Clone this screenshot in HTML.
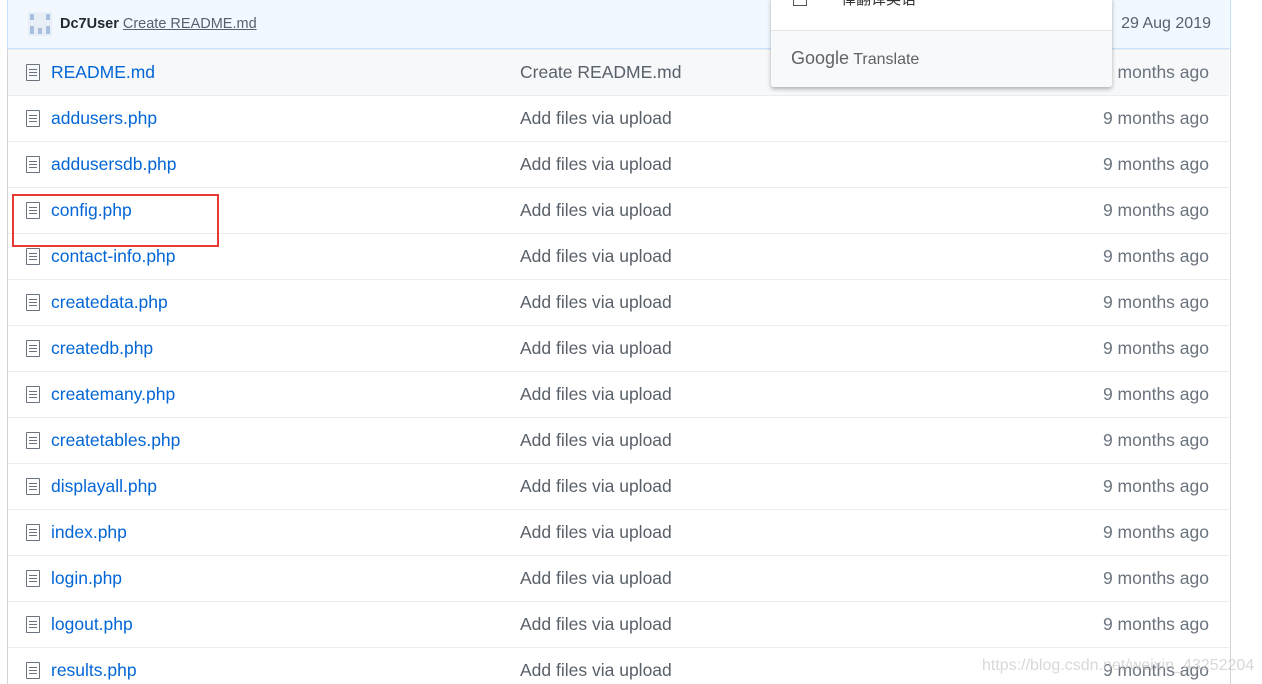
<!DOCTYPE html>
<html><head><meta charset="utf-8"><style>
html,body{margin:0;width:1262px;height:684px;overflow:hidden}
body{background:#fff;font-family:"Segoe UI","Liberation Sans","Noto Sans CJK SC",sans-serif;position:relative}
.box{position:absolute;left:7px;top:0;width:1222px;height:684px;border-left:1px solid #d1d5da;border-right:1px solid #d1d5da;box-sizing:border-box;width:1224px}
.hdr{position:absolute;left:7px;top:0;width:1222px;height:48px;background:#f1f8ff;border:1px solid #c8e1ff;border-top:none}
.row{position:absolute;left:8px;width:1221px;height:37px;padding-bottom:0;border-top:1px solid #eaecef;font-size:17.5px;overflow:hidden}
.row .n{position:absolute;left:43px;top:12px;color:#0366d6}
.row .m{position:absolute;left:512px;top:12px;color:#586069}
.row .a{position:absolute;right:20px;top:12px;color:#6a737d}
.ic{position:absolute;left:18px;top:14px;width:14px;height:17px;border:1.5px solid #6a737d;border-radius:1px;box-sizing:border-box}
.ic:before{content:"";position:absolute;left:2px;right:2px;top:4px;height:8px;background:repeating-linear-gradient(#6a737d 0 1px,transparent 1px 3px)}
</style></head><body>
<div class="box"></div>
<div class="hdr">
 <div style="position:absolute;left:20px;top:12px;width:24px;height:24px;background:#e8eef5">
  <div style="position:absolute;left:2px;top:2px;width:4px;height:6px;background:#a8bfe0"></div>
  <div style="position:absolute;left:18px;top:2px;width:4px;height:6px;background:#a8bfe0"></div>
  <div style="position:absolute;left:2px;top:14px;width:4px;height:8px;background:#a8bfe0"></div>
  <div style="position:absolute;left:10px;top:16px;width:4px;height:6px;background:#a8bfe0"></div>
  <div style="position:absolute;left:18px;top:14px;width:4px;height:8px;background:#a8bfe0"></div>
 </div>
 <div style="position:absolute;left:52px;top:16px;font-size:14.5px;color:#24292e"><b style="font-weight:600">Dc7User</b> <span style="color:#586069;text-decoration:underline">Create README.md</span></div>
 <div style="position:absolute;right:19px;top:15px;font-size:16px;color:#586069">29 Aug 2019</div>
</div>
<div class="row" style="top:49px;height:45px;background:#f6f8fa"><div class="ic"></div><span class="n">README.md</span><span class="m">Create README.md</span><span class="a">9 months ago</span></div>
<div class="row" style="top:95px;height:45px"><div class="ic"></div><span class="n">addusers.php</span><span class="m">Add files via upload</span><span class="a">9 months ago</span></div>
<div class="row" style="top:141px;height:45px"><div class="ic"></div><span class="n">addusersdb.php</span><span class="m">Add files via upload</span><span class="a">9 months ago</span></div>
<div class="row" style="top:187px;height:45px"><div class="ic"></div><span class="n">config.php</span><span class="m">Add files via upload</span><span class="a">9 months ago</span></div>
<div class="row" style="top:233px;height:45px"><div class="ic"></div><span class="n">contact-info.php</span><span class="m">Add files via upload</span><span class="a">9 months ago</span></div>
<div class="row" style="top:279px;height:45px"><div class="ic"></div><span class="n">createdata.php</span><span class="m">Add files via upload</span><span class="a">9 months ago</span></div>
<div class="row" style="top:325px;height:45px"><div class="ic"></div><span class="n">createdb.php</span><span class="m">Add files via upload</span><span class="a">9 months ago</span></div>
<div class="row" style="top:371px;height:45px"><div class="ic"></div><span class="n">createmany.php</span><span class="m">Add files via upload</span><span class="a">9 months ago</span></div>
<div class="row" style="top:417px;height:45px"><div class="ic"></div><span class="n">createtables.php</span><span class="m">Add files via upload</span><span class="a">9 months ago</span></div>
<div class="row" style="top:463px;height:45px"><div class="ic"></div><span class="n">displayall.php</span><span class="m">Add files via upload</span><span class="a">9 months ago</span></div>
<div class="row" style="top:509px;height:45px"><div class="ic"></div><span class="n">index.php</span><span class="m">Add files via upload</span><span class="a">9 months ago</span></div>
<div class="row" style="top:555px;height:45px"><div class="ic"></div><span class="n">login.php</span><span class="m">Add files via upload</span><span class="a">9 months ago</span></div>
<div class="row" style="top:601px;height:45px"><div class="ic"></div><span class="n">logout.php</span><span class="m">Add files via upload</span><span class="a">9 months ago</span></div>
<div class="row" style="top:647px;height:36px"><div class="ic"></div><span class="n">results.php</span><span class="m">Add files via upload</span><span class="a">9 months ago</span></div>
<div style="position:absolute;left:12px;top:194px;width:203px;height:49px;border:2px solid #e53935"></div>
<div style="position:absolute;left:771px;top:-2px;width:341px;height:89px;background:#fff;box-shadow:0 2px 4px rgba(0,0,0,.3);border-radius:0 0 3px 3px;overflow:hidden">
 <div style="position:absolute;left:22px;top:-6px;width:12px;height:12px;border:1.5px solid #555"></div>
 <div style="position:absolute;left:55px;top:-10px;font-size:15px;color:#333">一律翻译英语</div>
 <div style="position:absolute;left:0;top:32px;width:100%;height:60px;background:#f8f9fa;border-top:1px solid #e3e5e8"></div>
 <div style="position:absolute;left:20px;top:50px;color:#5f6368"><span style="font-size:18px">Google</span><span style="font-size:16px"> Translate</span></div>
</div>
<div style="position:absolute;left:982px;top:657px;font-size:16px;color:rgba(200,200,200,.7);font-family:'Liberation Sans',sans-serif">https://blog.csdn.net/weixin_43252204</div>
</body></html>
